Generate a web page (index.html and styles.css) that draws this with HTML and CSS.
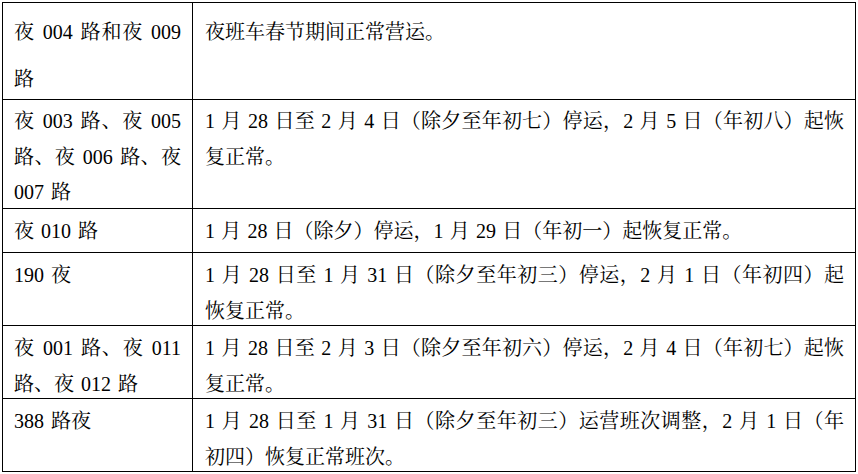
FILE: index.html
```html
<!DOCTYPE html>
<html lang="zh-CN">
<head>
<meta charset="utf-8">
<title>夜班车春节运营安排</title>
<link rel="stylesheet" href="styles.css">
</head>
<body>
<div class="grid">
  <div class="cell r1">夜 004 路和夜 009 路</div>
  <div class="cell info r1">夜班车春节期间正常营运。</div>

  <div class="cell r2">夜 003 路、夜 005 路、夜 006 路、夜 007 路</div>
  <div class="cell info r2">1 月 28 日至 2 月 4 日（除夕至年初七）停运，2 月 5 日（年初八）起恢复正常。</div>

  <div class="cell r3">夜 010 路</div>
  <div class="cell info r3">1 月 28 日（除夕）停运，1 月 29 日（年初一）起恢复正常。</div>

  <div class="cell r4">190 夜</div>
  <div class="cell info r4">1 月 28 日至 1 月 31 日（除夕至年初三）停运，2 月 1 日（年初四）起恢复正常。</div>

  <div class="cell r4">夜 001 路、夜 011 路、夜 012 路</div>
  <div class="cell info r4">1 月 28 日至 2 月 3 日（除夕至年初六）停运，2 月 4 日（年初七）起恢复正常。</div>

  <div class="cell r4">388 路夜</div>
  <div class="cell info r4">1 月 28 日至 1 月 31 日（除夕至年初三）运营班次调整，2 月 1 日（年初四）恢复正常班次。</div>
</div>
</body>
</html>
```

FILE: styles.css
```css
html, body {
  margin: 0;
  padding: 0;
  background: #ffffff;
}

body {
  padding: 2px 0 0 2px;
  font-family: "Liberation Serif", "Noto Serif CJK SC", "AR PL UMing CN", "Noto Sans CJK SC", serif;
  font-size: 20px;
  color: #000000;
}

.grid {
  display: grid;
  width: 854px;
  box-sizing: border-box;
  grid-template-columns: 190px 663px;
  grid-template-rows: 97px 109px 44px 73px 73px 73px;
  border-top: 1px solid #000;
  border-left: 1px solid #000;
}

.cell {
  box-sizing: border-box;
  border-right: 1px solid #000;
  border-bottom: 1px solid #000;
  padding: 4px 11px 0 11px;
  text-align: justify;
  word-spacing: 2px;
  line-height: 36px;
  overflow: visible;
}

.info {
  padding-left: 12px;
  padding-right: 11px;
  word-spacing: 1.2px;
}

.r1 {
  padding-top: 6px;
  line-height: 46.5px;
}

.r2 {
  line-height: 35.5px;
}

.r3 {
  line-height: 36px;
}
```
